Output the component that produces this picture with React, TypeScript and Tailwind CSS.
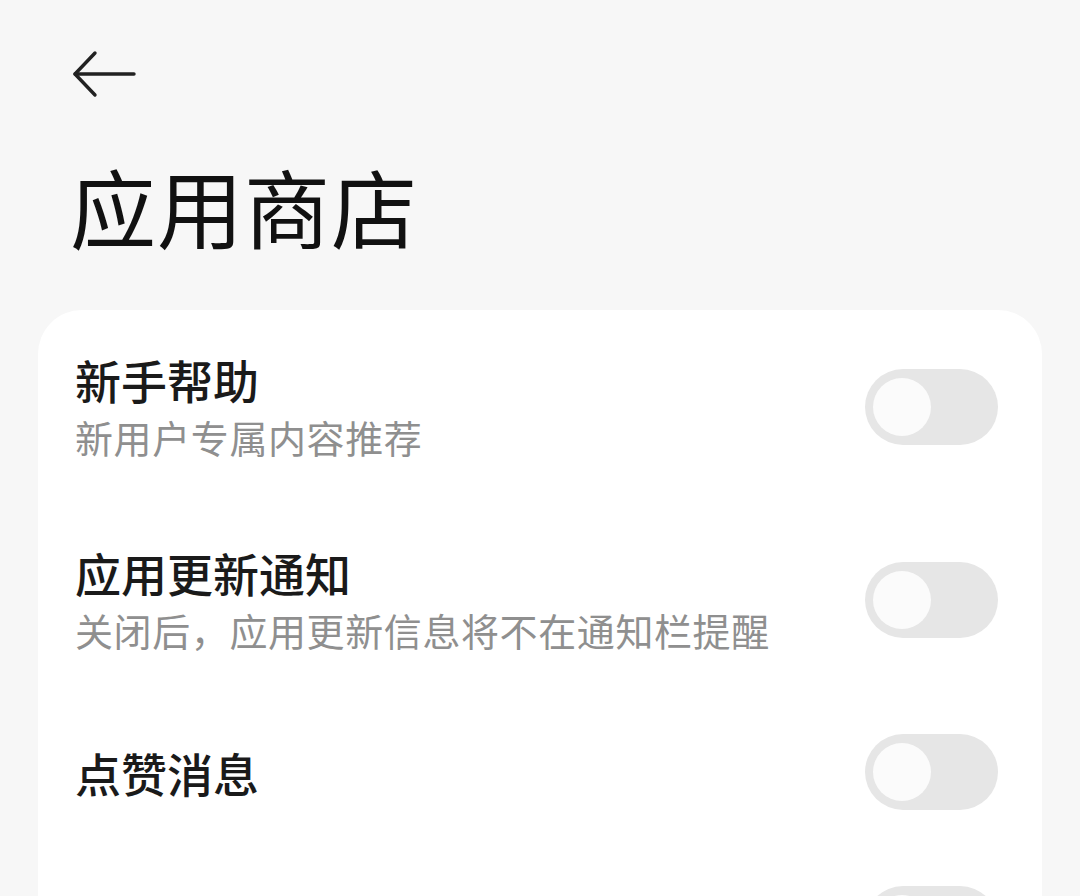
import React from "react";

const rows = [
  { title: "新手帮助", desc: "新用户专属内容推荐" },
  { title: "应用更新通知", desc: "关闭后，应用更新信息将不在通知栏提醒" },
  { title: "点赞消息", desc: "" },
  { title: "", desc: "" },
];

// off-state switch, miui style
function Toggle() {
  return (
    <div className="w-[133px] h-[76px] rounded-full bg-[#e6e6e6] flex items-center px-[8px] shrink-0">
      <div className="w-[58px] h-[58px] rounded-full bg-[#fbfbfb]" />
    </div>
  );
}

export default function App() {
  return (
    <div
      className="w-[1080px] h-[896px] overflow-hidden bg-[#f7f7f7] text-[#111]"
      style={{ fontFamily: '"Noto Sans CJK SC", "Noto Sans", sans-serif' }}
    >
      {/* header */}
      <div className="pl-[72px] pt-[50px] h-[100px]">
        <svg width="64" height="48" viewBox="0 0 64 48" fill="none" stroke="#222" strokeWidth="3.4" strokeLinecap="round" strokeLinejoin="round">
          <path d="M3 24H62" />
          <path d="M23 3L3 24L23 45" />
        </svg>
      </div>
      <h1 className="pl-[70px] mt-[56px] text-[86px] leading-[100px] font-normal tracking-[1px]">应用商店</h1>

      {/* settings card */}
      <div className="mt-[54px] mx-[38px] bg-white rounded-[44px] h-[700px]">
        {rows.map((r, i) => (
          <div
            key={i}
            className={`flex items-center justify-between pl-[37px] pr-[44px] ${
              r.desc ? "h-[193px]" : "h-[152px]"
            }`}
          >
            <div className="flex flex-col">
              {r.title && (
                <div className="text-[46px] leading-[58px] font-medium text-[#1a1a1a]">{r.title}</div>
              )}
              {r.desc && (
                <div className="text-[38px] leading-[54px] tracking-[0.6px] text-[#8f8f8f] mt-[2px]">{r.desc}</div>
              )}
            </div>
            <Toggle />
          </div>
        ))}
      </div>
    </div>
  );
}
